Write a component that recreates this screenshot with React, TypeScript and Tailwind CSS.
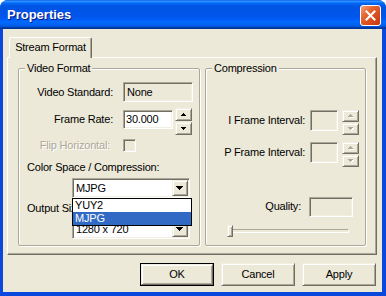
import React from "react";

const F = "font-['Liberation_Sans',Arial,sans-serif]";
const SUNKEN =
  "border border-t-[#aca899] border-l-[#aca899] border-b-white border-r-white shadow-[inset_1px_1px_0_#716f64,inset_-1px_-1px_0_#f1efe2]";
const RAISED =
  "border border-t-[#f1efe2] border-l-[#f1efe2] border-b-[#716f64] border-r-[#716f64] shadow-[inset_1px_1px_0_#ffffff,inset_-1px_-1px_0_#aca899]";

function Arrow({ dir, size, disabled }: { dir: "up" | "down"; size: number; disabled?: boolean }) {
  const rows: { x: number; y: number; w: number }[] = [];
  for (let i = 0; i < size; i++) {
    const w = dir === "down" ? 2 * (size - i) - 1 : 2 * i + 1;
    const x = (2 * size - 1 - w) / 2;
    rows.push({ x, y: i, w });
  }
  const W = 2 * size - 1;
  return (
    <svg width={W + 1} height={size + 1} shapeRendering="crispEdges" className="block">
      {disabled &&
        rows.map((r, i) => <rect key={"s" + i} x={r.x + 1} y={r.y + 1} width={r.w} height={1} fill="#ffffff" />)}
      {rows.map((r, i) => (
        <rect key={i} x={r.x} y={r.y} width={r.w} height={1} fill={disabled ? "#aca899" : "#000000"} />
      ))}
    </svg>
  );
}

function Combo({ text }: { text: string }) {
  return (
    <div className={`${SUNKEN} flex h-[20px] w-[118px] items-stretch bg-white p-[1px]`}>
      <div className="flex flex-1 items-center pl-[2px] leading-[13px] text-black">{text}</div>
      <div className={`${RAISED} flex w-[16px] items-center justify-center bg-[#ece9d8]`}>
        <Arrow dir="down" size={4} />
      </div>
    </div>
  );
}

function SmallSpin() {
  return (
    <div className="ml-[4px] flex w-[17px] flex-col gap-[1px]">
      <div className={`${RAISED} flex h-[12px] items-center justify-center bg-[#ece9d8]`}>
        <Arrow dir="up" size={3} disabled />
      </div>
      <div className={`${RAISED} flex h-[12px] items-center justify-center bg-[#ece9d8]`}>
        <Arrow dir="down" size={3} disabled />
      </div>
    </div>
  );
}

function Button({ label, def }: { label: string; def?: boolean }) {
  const inner = (
    <div className={`${RAISED} flex h-full w-full items-center justify-center bg-[#ece9d8] text-black`}>
      {label}
    </div>
  );
  return def ? (
    <div className="h-[23px] w-[74px] border border-black">{inner}</div>
  ) : (
    <div className="h-[23px] w-[74px]">{inner}</div>
  );
}

const FIELDSET =
  "h-[184px] rounded-[2px] border border-[#aca899] shadow-[inset_1px_1px_0_#ffffff,1px_1px_0_#ffffff]";
const LEGEND = "ml-[6px] bg-[#ece9d8] px-[2px] leading-[12px] text-black";

export default function App() {
  return (
    <div className={`h-[296px] w-[386px] bg-white text-[11px] tracking-[-0.2px] ${F}`}>
      <div className="flex h-full flex-col overflow-hidden rounded-t-[8px] bg-[#0a47dc]">
        {/* Title bar */}
        <div className="flex h-[29px] shrink-0 items-center justify-between bg-[linear-gradient(180deg,#0058ee_0%,#3593ff_4%,#288eff_6%,#127dff_8%,#036ffc_10%,#0262ee_14%,#0057e5_20%,#0054e3_24%,#0055eb_56%,#005bf5_66%,#026afe_76%,#0062ef_86%,#0052d6_92%,#0040ab_94%,#003092_100%)] pl-[7px] pr-[5px]">
          <span className="text-[13px] font-bold tracking-normal text-white [text-shadow:1px_1px_#0a1883]">Properties</span>
          <div className="mt-[1px] flex h-[21px] w-[21px] items-center justify-center rounded-[3px] border border-white bg-[linear-gradient(135deg,#f4a07c_0%,#e5642f_35%,#d7481a_70%,#c23a12_100%)]">
            <svg width="11" height="11" viewBox="0 0 11 11">
              <path d="M1.5 1.5 L9.5 9.5 M9.5 1.5 L1.5 9.5" stroke="#ffffff" strokeWidth="2" strokeLinecap="square" />
            </svg>
          </div>
        </div>

        {/* Body */}
        <div className="mb-[4px] ml-[3px] mr-[4px] flex flex-1 flex-col bg-[#ece9d8]">
          {/* Tab strip */}
          <div className="flex pl-[6px] pt-[8px]">
            <div className="relative z-10 -mb-[1px] flex h-[21px] w-[83px] items-center justify-center rounded-t-[2px] border-l border-r border-t border-l-white border-r-[#716f64] border-t-white bg-[#ece9d8] pb-[1px] text-black shadow-[inset_-1px_0_0_#aca899]">
              Stream Format
            </div>
          </div>

          {/* Tab panel */}
          <div className="ml-[4px] flex h-[198px] w-[370px] gap-[5px] border border-b-[#716f64] border-l-white border-r-[#716f64] border-t-white pl-[10px] pt-[4px] shadow-[inset_-1px_-1px_0_#aca899]">
            {/* Video Format */}
            <fieldset className={`${FIELDSET} w-[182px]`}>
              <legend className={LEGEND}>Video Format</legend>

              <div className="mt-[8px] flex h-[20px] items-center">
                <div className="w-[94px] text-right text-black">Video Standard:</div>
                <div className={`${SUNKEN} ml-[10px] flex h-[20px] w-[70px] items-center bg-[#ece9d8] pl-[3px] text-black`}>
                  None
                </div>
              </div>

              <div className="mt-[6px] flex items-start">
                <div className="mt-[2px] w-[94px] text-right leading-[19px] text-black">Frame Rate:</div>
                <div className={`${SUNKEN} ml-[10px] mt-[2px] flex h-[19px] w-[50px] items-center bg-white pl-[2px] text-black`}>
                  30.000
                </div>
                <div className="ml-[2px] flex w-[17px] flex-col gap-[1px]">
                  <div className={`${RAISED} flex h-[13px] items-center justify-center bg-[#ece9d8]`}>
                    <Arrow dir="up" size={3} />
                  </div>
                  <div className={`${RAISED} flex h-[13px] items-center justify-center bg-[#ece9d8]`}>
                    <Arrow dir="down" size={3} />
                  </div>
                </div>
              </div>

              <div className="mt-[4px] flex h-[13px] items-center">
                <div className="w-[94px] pr-[3px] text-right leading-[13px] text-[#aca899] [text-shadow:1px_1px_0_#ffffff]">
                  Flip Horizontal:
                </div>
                <div className={`${SUNKEN} ml-[10px] h-[13px] w-[13px] bg-[#ece9d8]`} />
              </div>

              <div className="ml-[8px] mt-[9px] leading-[13px] text-black">Color Space / Compression:</div>

              <div className="relative z-20 ml-[53px] mt-[4px] w-[118px]">
                <Combo text="MJPG" />
                <div className="absolute left-0 top-full w-[120px] border border-black bg-white">
                  <div className="pl-[2px] leading-[13px] text-black">YUY2</div>
                  <div className="bg-[#316ac5] pl-[2px] leading-[13px] text-white">MJPG</div>
                </div>
              </div>

              <div className="ml-[8px] mt-[4px] leading-[13px] text-black">Output Size:</div>

              <div className="ml-[53px] mt-[4px]">
                <Combo text="1280 x 720" />
              </div>
            </fieldset>

            {/* Compression */}
            <fieldset className={`${FIELDSET} w-[161px]`}>
              <legend className={LEGEND}>Compression</legend>

              <div className="mt-[36px] flex items-start">
                <div className="w-[99px] text-right leading-[21px] text-black">I Frame Interval:</div>
                <div className={`${SUNKEN} ml-[5px] h-[21px] w-[28px] bg-[#ece9d8]`} />
                <SmallSpin />
              </div>

              <div className="mt-[7px] flex items-start">
                <div className="w-[99px] text-right leading-[21px] text-black">P Frame Interval:</div>
                <div className={`${SUNKEN} ml-[5px] h-[21px] w-[28px] bg-[#ece9d8]`} />
                <SmallSpin />
              </div>

              <div className="mt-[30px] flex items-start">
                <div className="w-[95px] text-right leading-[18px] text-black">Quality:</div>
                <div className={`${SUNKEN} ml-[8px] h-[20px] w-[44px] bg-[#ece9d8]`} />
              </div>

              <div className="relative ml-[21px] mt-[8px] flex h-[12px] w-[122px] items-center">
                <div className={`${SUNKEN} h-[4px] w-full bg-[#ece9d8] shadow-none`} />
                <div className={`${RAISED} absolute left-0 top-0 h-[12px] w-[6px] bg-[#ece9d8]`} />
              </div>
            </fieldset>
          </div>

          {/* Buttons */}
          <div className="mt-[8px] flex justify-end gap-[7px] pr-[6px]">
            <Button label="OK" def />
            <Button label="Cancel" />
            <Button label="Apply" />
          </div>
        </div>
      </div>
    </div>
  );
}
